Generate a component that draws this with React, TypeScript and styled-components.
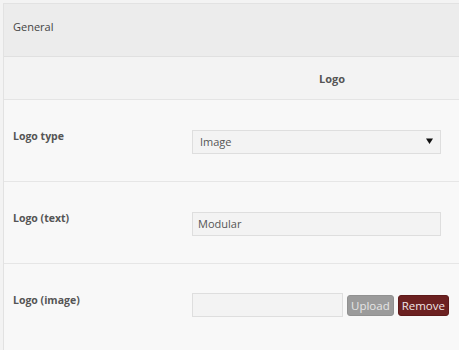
import styled, { createGlobalStyle } from 'styled-components';

/* Theme options panel — "General" tab, Logo section. Static markup only. */

const GlobalStyle = createGlobalStyle`
  html, body {
    margin: 0;
    padding: 0;
    background: #f3f3f3;
  }
  body {
    font-family: "Open Sans", "Liberation Sans", sans-serif;
    color: #444;
  }
`;

interface FieldRow {
  label: string;
  kind: 'select' | 'text' | 'upload';
  value?: string;
}

const ROWS: FieldRow[] = [
  { label: 'Logo type', kind: 'select', value: 'Image' },
  { label: 'Logo (text)', kind: 'text', value: 'Modular' },
  { label: 'Logo (image)', kind: 'upload' },
];

export default function App() {
  return (
    <>
      <GlobalStyle />
      <Page>
        <Panel>
          <TabHeader>General</TabHeader>

          <SectionRow>
            <LabelCell />
            <SectionTitle>Logo</SectionTitle>
          </SectionRow>

          {ROWS.map(r => (
            <Row key={r.label}>
              <Label>{r.label}</Label>
              <Control>
                {r.kind === 'select' && (
                  <SelectWrap>
                    <Select defaultValue={r.value}>
                      <option>Image</option>
                      <option>Text</option>
                    </Select>
                    <Arrow width="7" height="6" viewBox="0 0 7 6">
                      <path d="M0 0.5 H7 L3.5 6 Z" fill="#111" />
                    </Arrow>
                  </SelectWrap>
                )}
                {r.kind === 'text' && <TextInput defaultValue={r.value} />}
                {r.kind === 'upload' && (
                  <UploadLine>
                    <TextInput $width={151} />
                    <Button type="button" $tone="grey">Upload</Button>
                    <Button type="button" $tone="red">Remove</Button>
                  </UploadLine>
                )}
              </Control>
            </Row>
          ))}
        </Panel>
      </Page>
    </>
  );
}

// ── Styled ───────────────────────────────────────────────────────────────────

const Page = styled.div`
  padding: 3px 0 0 3px;
  height: 347px;
  overflow: hidden;
`;

const Panel = styled.div`
  border-top: 1px solid #e2e2e2;
  border-left: 1px solid #e2e2e2;
  background: #f8f8f8;
  min-height: 100%;
`;

const TabHeader = styled.div`
  height: 53px;
  box-sizing: border-box;
  display: flex;
  align-items: center;
  padding: 0 0 8px 9px;
  background: #ececec;
  border-bottom: 1px solid #e0e0e0;
  font-size: 11px;
  color: #444;
`;

const SectionRow = styled.div`
  display: grid;
  grid-template-columns: 176px 1fr;
  height: 42px;
  background: #f3f3f3;
  border-bottom: 1px solid #e4e4e4;
`;

const LabelCell = styled.div``;

const SectionTitle = styled.div`
  display: flex;
  align-items: center;
  justify-content: center;
  padding-left: 25px;
  font-size: 11px;
  font-weight: 700;
  color: #555;
`;

const Row = styled.div`
  display: grid;
  grid-template-columns: 176px 1fr;
  align-items: start;
  height: 82px;
  box-sizing: border-box;
  padding-top: 29px;
  border-bottom: 1px solid #e6e6e6;

  &:last-child {
    border-bottom: none;
    height: auto;
  }
`;

const Label = styled.div`
  padding-left: 9px;
  font-size: 10.5px;
  line-height: 14px;
  font-weight: 700;
  color: #555;
`;

const Control = styled.div`
  padding-left: 12px;
`;

const SelectWrap = styled.div`
  position: relative;
  width: 249px;
`;

const Select = styled.select`
  appearance: none;
  width: 100%;
  height: 24px;
  box-sizing: border-box;
  padding: 0 0 0 7px;
  border: 1px solid #dedede;
  border-radius: 0;
  background: #f3f3f3;
  font-family: "Open Sans", "Liberation Sans", sans-serif;
  font-size: 11px;
  color: #555;
  outline: none;
`;

const Arrow = styled.svg`
  position: absolute;
  right: 8px;
  top: 9px;
  pointer-events: none;
`;

const TextInput = styled.input<{ $width?: number }>`
  width: ${p => p.$width ?? 249}px;
  height: 24px;
  box-sizing: border-box;
  padding: 0 0 0 5px;
  border: 1px solid #dedede;
  background: #f3f3f3;
  font-family: "Open Sans", "Liberation Sans", sans-serif;
  font-size: 11px;
  color: #555;
  outline: none;
`;

const UploadLine = styled.div`
  display: flex;
  align-items: center;
  gap: 4px;
`;

const Button = styled.button<{ $tone: 'grey' | 'red' }>`
  height: 21px;
  padding: 0 3px;
  border: 1px solid ${p => (p.$tone === 'red' ? '#5e1a1a' : '#919191')};
  border-radius: 3px;
  background: ${p => (p.$tone === 'red' ? '#6c2121' : '#9b9b9b')};
  color: ${p => (p.$tone === 'red' ? '#f0e6e6' : '#e6e6e6')};
  font-family: "Open Sans", "Liberation Sans", sans-serif;
  font-size: 11.5px;
  cursor: pointer;
`;
